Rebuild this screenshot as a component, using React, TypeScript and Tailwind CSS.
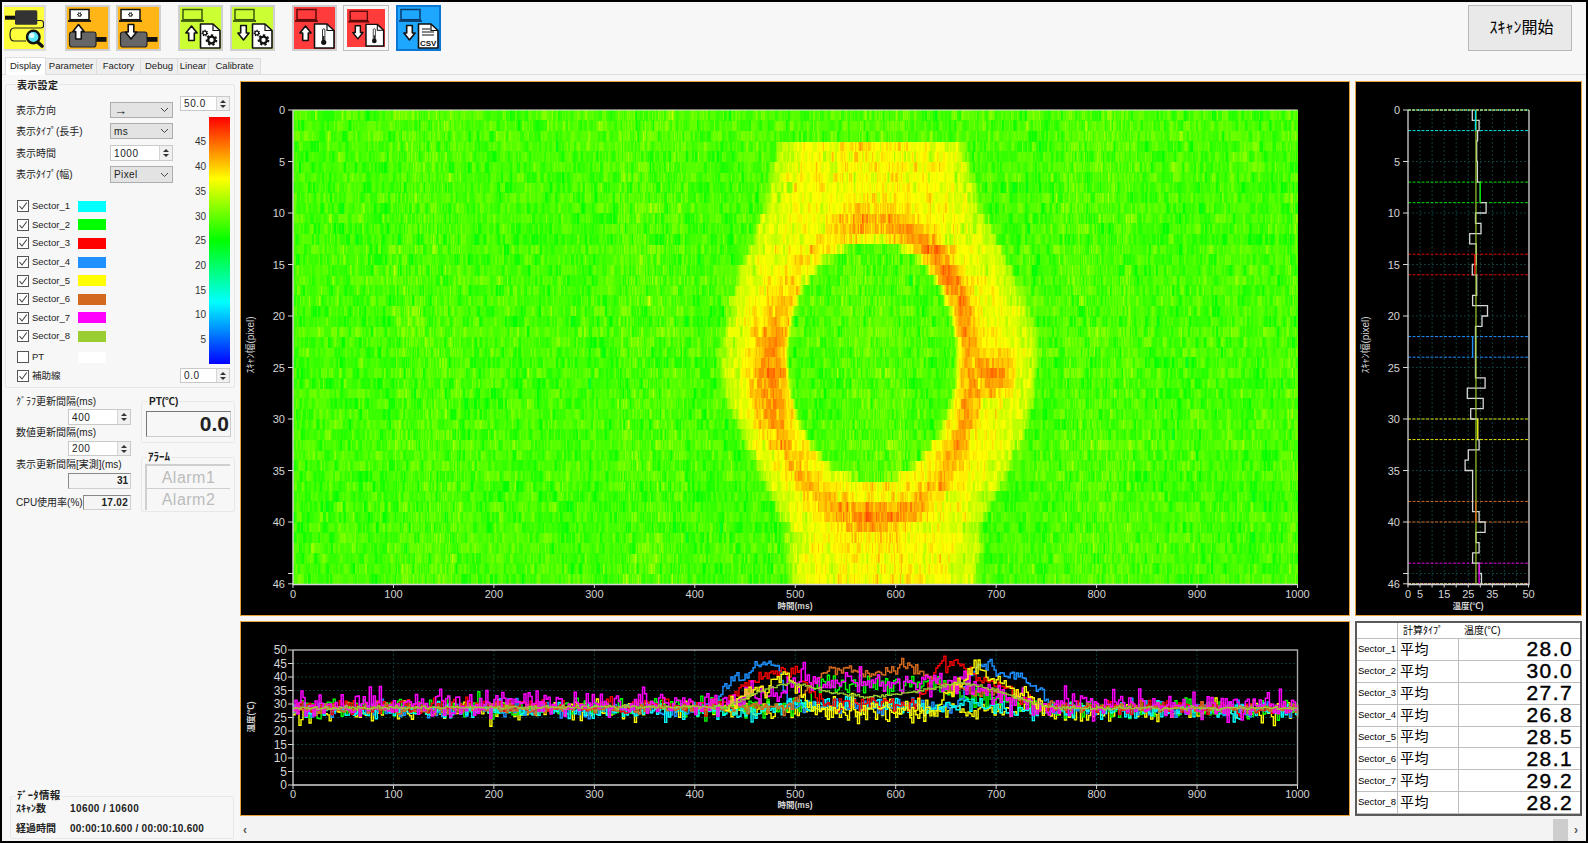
import React from "react";

function rng(seed: number) {
  let a = seed >>> 0;
  return () => {
    a = (a + 0x6d2b79f5) >>> 0;
    let t = a;
    t = Math.imul(t ^ (t >>> 15), t | 1);
    t ^= t + Math.imul(t ^ (t >>> 7), t | 61);
    return ((t ^ (t >>> 14)) >>> 0) / 4294967296;
  };
}
const gauss = (r: () => number) => Math.sqrt(-2 * Math.log(r() + 1e-9)) * Math.cos(6.2832 * r());
const clamp = (v: number, a = 0, b = 1) => Math.max(a, Math.min(b, v));
function interp(t: number[][], x: number) {
  if (x <= t[0][0]) return t[0][1];
  for (let i = 1; i < t.length; i++) {
    if (x <= t[i][0]) {
      const f = (x - t[i - 1][0]) / (t[i][0] - t[i - 1][0]);
      return t[i - 1][1] + f * (t[i][1] - t[i - 1][1]);
    }
  }
  return t[t.length - 1][1];
}

const LEFT = [[3.1, 485], [9, 469], [14, 450], [20, 430], [25, 424], [30, 438], [35, 464], [40, 489], [46, 495]];
const RIGHT = [[3.1, 667], [9, 682], [14, 707], [20, 734], [25, 742], [30, 732], [35, 712], [40, 686], [46, 680]];
const PEAK = [[-180, 41], [-135, 39], [-90, 42], [-60, 44], [-40, 45], [-20, 43.5], [0, 42.5], [30, 42.5], [60, 42], [90, 44], [120, 42], [150, 41], [180, 41]];

function field(ms: number, row: number) {
  const base = 29;
  if (row < 3.1) return base;
  const l = interp(LEFT, row);
  const r = interp(RIGHT, row);
  const e = Math.min(ms - l, r - ms);
  if (e < -4) return base;
  const s2 = clamp((e + 4) / 8);
  let v = 35 + 2.6 * clamp(e / 30);
  const dx = (ms - 576) / 84;
  const dy = (row - 24) / (row > 24 ? 12 : 11.3);
  const d = Math.sqrt(dx * dx + dy * dy);
  const th = (Math.atan2(dy, dx) * 180) / Math.PI;
  const dp = 1.16 + 0.14 * Math.max(0, Math.sin((th * Math.PI) / 180));
  const bump = Math.exp(-Math.pow((d - dp) / 0.13, 2));
  v = v + (interp(PEAK, th) - v) * bump;
  const sx = (ms - 474) / 19;
  const sy = (row - 25.5) / 5.5;
  const hot = Math.exp(-(sx * sx + sy * sy));
  v = v + (44 - v) * hot;
  const tx = (ms - 698) / 17;
  const ty = (row - 25.5) / 2.2;
  const tab = Math.exp(-(tx * tx * tx * tx + ty * ty * ty * ty));
  v = v + (43 - v) * tab;
  const inner = clamp((d - 0.97) / 0.06);
  const zone = base + s2 * (v - base);
  return base + 0.3 + inner * (zone - base - 0.3);
}

function buildHeat() {
  const r = rng(77);
  const buckets: Record<number, string[]> = {};
  const X0 = 293, Y0 = 110, RH = 10.3, CW = 1.0045;
  for (let row = 0; row < 46; row++) {
    let ar = 0;
    const y = Y0 + row * RH;
    let runStart = 0, runB = -1;
    const flush = (end: number) => {
      if (runB < 0) return;
      const w = ((end - runStart) * CW + 0.7).toFixed(1);
      (buckets[runB] = buckets[runB] || []).push(`M${(X0 + runStart * CW).toFixed(1)} ${y.toFixed(1)}h${w}v${RH + 0.7}h-${w}z`);
    };
    const off = gauss(r) * 0.25;
    for (let c = 0; c < 1000; c++) {
      ar = 0.45 * ar + 1.3 * gauss(r);
      const v = field(c + 0.5, row + 0.5) + ar + off;
      const h = clamp(240 - 4.8 * v, 0, 240);
      const b = Math.round(h / 4) * 4;
      if (b !== runB) {
        flush(c);
        runB = b;
        runStart = c;
      }
    }
    flush(1000);
  }
  return Object.keys(buckets).map((k) => ({ hue: Number(k), d: buckets[Number(k)].join("") }));
}
const HEAT = buildHeat();

const SERIES: { c: string; w: number; sd: number; t: number[][] }[] = [
  { c: "#ffff00", w: 1.4, sd: 1.8, t: [[0, 27.3], [425, 28], [1000, 27.3]] },
  { c: "#00ff00", w: 1.4, sd: 1.8, t: [[0, 28.5], [500, 29], [530, 37.5], [640, 38], [680, 32], [760, 28.5], [1000, 28.5]] },
  { c: "#1e90ff", w: 1.5, sd: 1.4, t: [[0, 28], [418, 28], [430, 38], [450, 40], [462, 44], [482, 44], [492, 30], [660, 29], [680, 44], [692, 45], [712, 40], [730, 38.5], [745, 34], [755, 28], [1000, 28]] },
  { c: "#00ffff", w: 1.4, sd: 1.4, t: [[0, 27.5], [470, 27.5], [500, 30], [640, 29], [680, 29.5], [720, 27.5], [1000, 27.5]] },
  { c: "#ff0000", w: 1.4, sd: 1.3, t: [[0, 28.5], [430, 30], [452, 38], [470, 41], [505, 41], [525, 30], [620, 30], [635, 40], [645, 45], [660, 45], [680, 40], [705, 36], [745, 29], [1000, 28.5]] },
  { c: "#d2691e", w: 1.5, sd: 1, t: [[0, 28], [490, 29], [510, 35], [535, 43], [552, 43.5], [578, 40], [600, 43.5], [615, 44], [632, 40], [650, 36], [700, 34], [745, 29], [1000, 28]] },
  { c: "#ff00ff", w: 1.5, sd: 2.4, t: [[0, 30], [420, 30], [450, 33], [485, 35], [500, 39], [520, 38], [645, 38], [675, 38], [695, 33], [745, 30], [1000, 30]] },
  { c: "#ffff01", w: 1.4, sd: 1.6, t: [[430, 28], [445, 34], [470, 36], [490, 42], [503, 36], [512, 28], [640, 28], [658, 37], [675, 43], [690, 42], [710, 37], [735, 32], [750, 28]] },
  { c: "#9acd32", w: 1.3, sd: 0.3, t: [[0, 28.5], [430, 29], [474, 36], [494, 38], [540, 34], [574, 32.5], [607, 34], [640, 36], [664, 38], [700, 35], [740, 30], [760, 28.5], [1000, 28.5]] },
];
const TY = (v: number) => 785 - 2.7 * v;
const LINES = SERIES.map((s, i) => {
  const r = rng(100 + i);
  let pts = "";
  const from = s.t[0][0];
  const to = s.t[s.t.length - 1][0];
  let prevY = "";
  for (let ms = from; ms <= to; ms += 2) {
    const v = interp(s.t, ms) + gauss(r) * s.sd;
    const x = (293 + ms * 1.0045).toFixed(1);
    const y = TY(v).toFixed(1);
    if (prevY) pts += `${x},${prevY} `;
    pts += `${x},${y} `;
    prevY = y;
  }
  return { c: s.c, w: s.w, pts };
});

const PROFILE: [number, number, number][] = [
  [0, 1, 26.7], [1, 2, 29.5], [2, 3, 28.9], [3, 5, 28.5], [5, 7, 28.8], [7, 9, 30], [9, 10, 32.4], [10, 11, 28], [11, 12, 30.3], [12, 13, 25.6], [13, 15, 28.3], [15, 16, 26.7], [16, 18, 28.5], [18, 19, 26.8], [19, 20, 33], [20, 21, 30.7], [21, 26, 28], [26, 27, 32], [27, 28, 24.6], [28, 29, 31.2], [29, 30, 26], [30, 32, 28.9], [32, 33, 29.5], [33, 34, 25], [34, 35, 23.7], [35, 39, 26.8], [39, 40, 29.5], [40, 41, 32], [41, 42, 28.2], [42, 43, 29.5], [43, 44, 26.8], [44, 45, 29.6], [45, 46, 30.5],
];
const PX = (t: number) => 1408 + t * 2.41;
const PY = (r: number) => 110 + r * 10.3;
const PROFILE_PTS = PROFILE.map(([a, b, t]) => `${PX(t).toFixed(1)},${PY(a).toFixed(1)} ${PX(t).toFixed(1)},${PY(b).toFixed(1)}`).join(" ");
const BANDS: [string, number, number, number][] = [
  ["#00e5e5", 0, 2, 28], ["#00e000", 7, 9, 30], ["#e00000", 14, 16, 27.7], ["#1e90ff", 22, 24, 26.8], ["#e8e800", 30, 32, 28.9], ["#d2691e", 38, 40, 28.1], ["#e000e0", 44, 46, 29.5],
];

const AXIS = "#d4d4d4";
const GRID = "#0c3b3b";

function Laptop({ c, fill = "none" }: { c: string; fill?: string }) {
  return (
    <g>
      <rect x="3" y="2.5" width="19" height="10.2" fill={fill} stroke={c} strokeWidth="1.5" />
      <path d="M1 14h23" stroke={c} strokeWidth="1.8" />
    </g>
  );
}
function Arrow({ x, y, down }: { x: number; y: number; down?: boolean }) {
  const d = down ? "M-2.8 -7.5 H2.8 V0 H5.6 L0 7 L-5.6 0 H-2.8 Z" : "M-2.8 7.5 H2.8 V0 H5.6 L0 -7 L-5.6 0 H-2.8 Z";
  return <path transform={`translate(${x} ${y})`} d={d} fill="#fff" stroke="#111" strokeWidth="1.6" strokeLinejoin="round" />;
}
function Doc() {
  return (
    <g>
      <path d="M20.5 17H33L40 23.5V41H20.5Z" fill="#fff" stroke="#111" strokeWidth="1.6" strokeLinejoin="round" />
      <path d="M33 17V23.5H40" fill="none" stroke="#111" strokeWidth="1.2" />
    </g>
  );
}
function Gear({ x, y, r }: { x: number; y: number; r: number }) {
  const c = 2 * Math.PI * r;
  return (
    <g>
      <circle cx={x} cy={y} r={r} fill="none" stroke="#111" strokeWidth={r * 0.55} strokeDasharray={`${c / 14} ${c / 14}`} />
      <circle cx={x} cy={y} r={r * 0.72} fill="none" stroke="#111" strokeWidth={r * 0.5} />
    </g>
  );
}
function Device() {
  return (
    <g>
      <rect x="29" y="30" width="10.5" height="4.8" fill="#111" />
      <rect x="2.5" y="25" width="26.5" height="15" rx="2.5" fill="#666" stroke="#222" strokeWidth="1.2" />
    </g>
  );
}
function Therm() {
  return (
    <g>
      <path d="M28.5 33V23a1.2 1.2 0 0 1 2.4 0V33" fill="#fff" stroke="#222" strokeWidth="0.9" />
      <circle cx="29.7" cy="35.3" r="2.6" fill="#111" />
      <path d="M29.7 29V34" stroke="#111" strokeWidth="1.2" />
    </g>
  );
}
function Tile({ bg, cls, children }: { bg: string; cls: string; children: React.ReactNode }) {
  return (
    <div className={cls}>
      <svg viewBox="0 0 41 42" className="w-full h-full block" style={{ background: bg }}>
        {children}
      </svg>
    </div>
  );
}
const T_STD = "w-[45px] h-[46px] border-2 border-[#cfcfcf] shrink-0";

function Toolbar() {
  return (
    <div className="h-[53px] flex items-start pt-[3px] bg-[#f7f7f7] shrink-0">
      <div className="w-[42px] h-[46px] ml-[2px] border-y-2 border-r-2 border-[#dcdcdc] shrink-0">
        <svg viewBox="0 0 40 42" className="w-full h-full block bg-[#ffff3c]">
          <path d="M33 13.5h4q2.5 0 2.5 2.5v3q0 2-2.5 2H10q-4 0-4 6.5t4 6.5h12" fill="none" stroke="#222" strokeWidth="1.2" />
          <rect x="1" y="8.7" width="10" height="4" fill="#111" />
          <rect x="11" y="3.3" width="22.3" height="14.4" rx="1.5" fill="#333" />
          <path d="M33 34.5L38 39" stroke="#111" strokeWidth="3.6" strokeLinecap="round" />
          <circle cx="29.3" cy="30" r="6.3" fill="#58e4f7" stroke="#111" strokeWidth="2.4" />
          <circle cx="27.8" cy="28.4" r="2.6" fill="#dffbff" />
        </svg>
      </div>
      <Tile bg="#ffb515" cls={`${T_STD} ml-[19px]`}>
        <Laptop c="#111" fill="#fff" />
        <Gear x={12.5} y={7.6} r={1.9} />
        <Device />
        <Arrow x={11.5} y={24.5} />
      </Tile>
      <Tile bg="#ffb515" cls={`${T_STD} ml-[6px]`}>
        <Laptop c="#111" fill="#fff" />
        <Gear x={12.5} y={7.6} r={1.9} />
        <Device />
        <Arrow x={13} y={25} down />
      </Tile>
      <Tile bg="#ccff33" cls={`${T_STD} ml-[17px]`}>
        <Laptop c="#3a5a10" />
        <Arrow x={11.5} y={26} />
        <Doc />
        <Gear x={24.8} y={26} r={2.6} />
        <Gear x={31.5} y={33} r={4.6} />
      </Tile>
      <Tile bg="#ccff33" cls={`${T_STD} ml-[7px]`}>
        <Laptop c="#3a5a10" />
        <Arrow x={11.5} y={26} down />
        <Doc />
        <Gear x={24.8} y={26} r={2.6} />
        <Gear x={31.5} y={33} r={4.6} />
      </Tile>
      <Tile bg="#ff3b3b" cls={`${T_STD} ml-[17px]`}>
        <Laptop c="#5c0a0a" />
        <Arrow x={11.5} y={26} />
        <Doc />
        <Therm />
      </Tile>
      <Tile bg="#ff3b3b" cls="w-[46px] h-[46px] border border-[#bdbdbd] p-[3px] bg-[#f7f7f7] ml-[6px] shrink-0">
        <Laptop c="#5c0a0a" />
        <Arrow x={11.5} y={26} down />
        <Doc />
        <Therm />
      </Tile>
      <Tile bg="#1ea7ff" cls="w-[45px] h-[46px] border-2 border-[#0b76d6] ml-[7px] shrink-0">
        <Laptop c="#0a3a6a" />
        <Arrow x={11.5} y={26} down />
        <Doc />
        <path d="M24 22h8M24 25h12M24 28h12" stroke="#111" strokeWidth="1.2" />
        <text x="30.2" y="38.5" textAnchor="middle" fontSize="8" fontWeight="700" fill="#111">CSV</text>
      </Tile>
      <div className="w-[104px] h-[46px] ml-auto mr-[14px] pl-[3px] bg-[#e9e9e9] border border-[#b8b8b8] flex items-center justify-center text-[16px] text-black shrink-0">
        ｽｷｬﾝ開始
      </div>
    </div>
  );
}

function Tabs() {
  const tabs: [string, string][] = [
    ["Parameter", "w-[51px]"], ["Factory", "w-[44px]"], ["Debug", "w-[37px]"], ["Linear", "w-[31px]"], ["Calibrate", "w-[52px]"],
  ];
  return (
    <div className="h-[20px] flex items-end pl-[3px] border-b border-[#dddddd] shrink-0">
      <div className="w-[41px] h-[18px] bg-white border-x border-t border-[#dddddd] flex items-center justify-center text-[9.5px] -mb-px pb-[1px]">Display</div>
      {tabs.map(([t, w]) => (
        <div key={t} className={`${w} h-[16px] bg-[#efefef] border-r border-t border-[#dddddd] flex items-center justify-center text-[9.5px]`}>{t}</div>
      ))}
    </div>
  );
}

function Chevron() {
  return (
    <svg width="9" height="6" viewBox="0 0 9 6" className="shrink-0">
      <path d="M1 1l3.5 3.5L8 1" fill="none" stroke="#444" strokeWidth="1" />
    </svg>
  );
}
function Select({ v, big }: { v: string; big?: boolean }) {
  return (
    <div className="w-[63px] h-full bg-[#e3e3e3] border border-[#adadad] flex items-center justify-between pl-[3px] pr-[3px] text-[10px] tracking-[0.4px]">
      <span className={big ? "text-[13px] leading-[13px]" : ""}>{v}</span>
      <Chevron />
    </div>
  );
}
function Spin({ v, w }: { v: string; w: string }) {
  return (
    <div className={`${w} h-full bg-white border border-[#c9c9c9] flex items-center text-[10px] tracking-[0.6px] shrink-0`}>
      <span className="flex-1 pl-[3px]">{v}</span>
      <span className="w-[13px] h-full flex flex-col items-center justify-center gap-[2px] bg-[#f0f0f0] border-l border-[#d5d5d5]">
        <span className="w-0 h-0 border-x-[3px] border-x-transparent border-b-[3px] border-b-[#333]" />
        <span className="w-0 h-0 border-x-[3px] border-x-transparent border-t-[3px] border-t-[#333]" />
      </span>
    </div>
  );
}
function Row({ label, children, cls }: { label: string; children: React.ReactNode; cls: string }) {
  return (
    <div className={`flex items-center ${cls}`}>
      <span className="w-[94px] text-[10px] whitespace-nowrap">{label}</span>
      {children}
    </div>
  );
}
function Check({ label, color, checked = true, cls }: { label: string; color?: string; checked?: boolean; cls?: string }) {
  return (
    <div className={`flex items-center h-[18.6px] pl-[1px] ${cls || ""}`}>
      <span className="w-[12px] h-[12px] border border-[#555] bg-white flex items-center justify-center shrink-0">
        {checked && (
          <svg width="10" height="10" viewBox="0 0 10 10">
            <path d="M1.5 5.2L4 8L8.8 1.5" fill="none" stroke="#444" strokeWidth="1.1" />
          </svg>
        )}
      </span>
      <span className="w-[46px] ml-[3px] text-[9.5px] whitespace-nowrap">{label}</span>
      {color && <span className="w-[28px] h-[11px]" style={{ background: color }} />}
    </div>
  );
}

const COLORS: [string, string][] = [
  ["Sector_1", "#00ffff"], ["Sector_2", "#00ff00"], ["Sector_3", "#ff0000"], ["Sector_4", "#1e90ff"],
  ["Sector_5", "#ffff00"], ["Sector_6", "#d2691e"], ["Sector_7", "#ff00ff"], ["Sector_8", "#9acd32"],
];

function Sidebar() {
  return (
    <div className="w-[238px] flex flex-col shrink-0">
      <div className="relative mt-[9px] ml-[3px] w-[230px] h-[304px] border border-[#e6e6e6] rounded-[2px] flex">
        <span className="absolute left-[10px] -top-[5px] px-[1px] bg-[#f7f7f7] text-[10px] font-bold tracking-[0.3px] leading-[11px]">表示設定</span>
        <div className="w-[174px] pl-[10px] pt-[17px] flex flex-col">
          <Row label="表示方向" cls="h-[16px]"><Select v="→" big /></Row>
          <Row label="表示ﾀｲﾌﾟ(長手)" cls="h-[16px] mt-[5px]"><Select v="ms" /></Row>
          <Row label="表示時間" cls="h-[16px] mt-[6px]"><Spin v="1000" w="w-[63px]" /></Row>
          <Row label="表示ﾀｲﾌﾟ(幅)" cls="h-[17px] mt-[5px]"><Select v="Pixel" /></Row>
          <div className="mt-[14px]">
            {COLORS.map(([n, c]) => (
              <Check key={n} label={n} color={c} />
            ))}
            <Check label="PT" color="#ffffff" checked={false} cls="mt-[2px]" />
            <Check label="補助線" />
          </div>
        </div>
        <div className="w-[50px] pt-[11px] flex flex-col">
          <div className="h-[15px]"><Spin v="50.0" w="w-[50px]" /></div>
          <div className="mt-[6px] h-[247px] flex justify-end">
            <div className="w-[26px] pr-[3px] pt-[12.6px] text-right text-[10px] text-[#333]">
              {["45", "40", "35", "30", "25", "20", "15", "10", "5"].map((t) => (
                <div key={t} className="h-[24.7px] flex items-center justify-end">{t}</div>
              ))}
            </div>
            <div className="w-[21px] h-full bg-[linear-gradient(to_bottom,#ff0000,#ffff00_25%,#00ff00_50%,#00ffff_75%,#0000ff)]" />
          </div>
          <div className="mt-[4px] h-[15px]"><Spin v="0.0" w="w-[50px]" /></div>
        </div>
      </div>

      <div className="flex">
        <div className="w-[129px] pl-[14px] pt-[8px] flex flex-col items-end">
          <div className="self-start h-[12px] text-[10px] leading-[12px] whitespace-nowrap">ｸﾞﾗﾌ更新間隔(ms)</div>
          <div className="h-[16px] mt-[1px]"><Spin v="400" w="w-[63px]" /></div>
          <div className="self-start h-[12px] mt-[2px] text-[10px] leading-[12px] whitespace-nowrap">数値更新間隔(ms)</div>
          <div className="h-[15px] mt-[2px]"><Spin v="200" w="w-[63px]" /></div>
          <div className="self-start h-[12px] mt-[3px] text-[10px] leading-[12px] whitespace-nowrap">表示更新間隔[実測](ms)</div>
          <div className="w-[63px] h-[16px] mt-[2px] bg-[#f5f5f5] border border-[#8a8a8a] border-r-[#cfcfcf] border-b-[#cfcfcf] text-[10px] font-bold text-right pr-[2px] leading-[14px]">31</div>
          <div className="self-stretch h-[15px] mt-[6px] flex items-center justify-between">
            <span className="text-[10px] whitespace-nowrap">CPU使用率(%)</span>
            <span className="w-[51px] h-full bg-[#f5f5f5] border border-[#8a8a8a] border-r-[#cfcfcf] border-b-[#cfcfcf] text-[10px] font-bold text-right pr-[2px] leading-[13px] tracking-[0.3px]">17.02</span>
          </div>
        </div>
        <div className="w-[94px] ml-[10px]">
          <div className="relative h-[42px] mt-[13px] border border-[#e8e8e8] rounded-[2px]">
            <span className="absolute left-[6px] -top-[6px] px-[1px] bg-[#f7f7f7] text-[10px] font-bold leading-[11px]">PT(℃)</span>
            <div className="w-[85px] h-[26px] ml-[4px] mt-[9px] bg-[#f7f7f7] border border-[#777] border-r-[#ccc] border-b-[#ccc] text-[21px] font-bold text-right pr-[1px] leading-[23px]">0.0</div>
          </div>
          <div className="relative h-[55px] mt-[14px] border border-[#e8e8e8] rounded-[2px]">
            <span className="absolute left-[5px] -top-[6px] px-[1px] bg-[#f7f7f7] text-[11px] font-bold leading-[11px]">ｱﾗｰﾑ</span>
            <div className="w-[85px] h-[24px] ml-[3px] mt-[6px] border-t-2 border-l-2 border-[#cfcfcf] text-[16px] text-[#bcbcbc] text-center tracking-[0.5px] leading-[23px]">Alarm1</div>
            <div className="w-[85px] h-[22px] ml-[3px] border-t border-l-2 border-[#cfcfcf] text-[16px] text-[#bcbcbc] text-center tracking-[0.5px] leading-[22px]">Alarm2</div>
          </div>
        </div>
      </div>

      <div className="relative mt-auto mb-[2px] ml-[8px] w-[224px] h-[43px] border border-[#e8e8e8] rounded-[2px] text-[10px] font-bold flex flex-col pl-[5px]">
        <span className="absolute left-[5px] -top-[7px] px-[1px] bg-[#f7f7f7] text-[10.5px] leading-[11px] tracking-[0.3px]">ﾃﾞｰﾀ情報</span>
        <div className="flex items-center h-[12px] mt-[5px]">
          <span className="w-[54px]">ｽｷｬﾝ数</span>
          <span className="tracking-[0.4px]">10600 / 10600</span>
        </div>
        <div className="flex items-center h-[12px] mt-[8px]">
          <span className="w-[54px]">経過時間</span>
          <span className="tracking-[0.25px]">00:00:10.600 / 00:00:10.600</span>
        </div>
      </div>
    </div>
  );
}

function HeatPanel() {
  const ticks = [0, 100, 200, 300, 400, 500, 600, 700, 800, 900, 1000];
  const rows = [0, 5, 10, 15, 20, 25, 30, 35, 40, 46];
  return (
    <div className="bg-black border border-[#e8a33d]">
      <svg viewBox="241 82 1108 533" className="w-full h-full block">
        <rect x="293" y="110" width="1004.5" height="474" fill="hsl(100 100% 50%)" />
        <g shapeRendering="crispEdges">
          {HEAT.map((b) => (
            <path key={b.hue} d={b.d} fill={`hsl(${b.hue} 100% 50%)`} />
          ))}
        </g>
        <path d="M293 110H1297.5" stroke="#eaeaea" strokeWidth="1" />
        <path d="M293 110V584.5H1297.5" fill="none" stroke={AXIS} strokeWidth="1.4" />
        {ticks.map((t) => {
          const x = 293 + t * 1.0045;
          return (
            <g key={t}>
              <path d={`M${x} 584v4`} stroke={AXIS} />
              <text x={x} y="598" textAnchor="middle" fontSize="11" fill={AXIS}>{t}</text>
            </g>
          );
        })}
        {rows.map((t) => {
          const y = 110 + t * 10.3;
          return (
            <g key={t}>
              <path d={`M288 ${y}h5`} stroke={AXIS} />
              <text x="285" y={y + 4} textAnchor="end" fontSize="11" fill={AXIS}>{t}</text>
            </g>
          );
        })}
        <path d="M288 573.5h5" stroke={AXIS} />
        <text x="795" y="609" textAnchor="middle" fontSize="8.5" fontWeight="700" fill={AXIS}>時間(ms)</text>
        <text transform="translate(254 345) rotate(-90)" textAnchor="middle" fontSize="10" fill={AXIS}>ｽｷｬﾝ幅(pixel)</text>
      </svg>
    </div>
  );
}

function ProfilePanel() {
  const rows = [0, 5, 10, 15, 20, 25, 30, 35, 40, 46];
  const xs = [0, 5, 15, 25, 35, 50];
  const grid = Array.from({ length: 9 }, (_, i) => (i + 1) * 5);
  return (
    <div className="bg-black border border-[#e8a33d]">
      <svg viewBox="1356 82 225 533" className="w-full h-full block">
        {grid.map((g) => (
          <path key={g} d={`M${PX(g)} 110V584`} stroke={GRID} strokeDasharray="2 2" />
        ))}
        {[5, 10, 15, 20, 25, 30, 35, 40, 45].map((r) => (
          <path key={r} d={`M1408 ${PY(r)}H1529`} stroke={GRID} strokeDasharray="2 2" />
        ))}
        {BANDS.map(([c, a, b]) => (
          <g key={a}>
            <path d={`M1408 ${PY(a)}H1529`} stroke={c} strokeDasharray="3 1.5" strokeWidth="1" />
            <path d={`M1408 ${PY(b)}H1529`} stroke={c} strokeDasharray="3 1.5" strokeWidth="1" />
          </g>
        ))}
        <path d={`M1408 ${PY(0)}H1529`} stroke="#ffff66" strokeDasharray="3 1" strokeWidth="1.2" />
        <path d={`M1408 ${PY(46)}H1529`} stroke="#c8e050" strokeDasharray="3 1" strokeWidth="1.2" />
        <polyline points={PROFILE_PTS} fill="none" stroke="#d6d6d6" strokeWidth="1.3" />
        <path d={`M${PX(28.2)} 110V584`} stroke="#9acd32" strokeWidth="1.2" />
        {BANDS.map(([c, a, b, t]) => (
          <path key={c} d={`M${PX(t)} ${PY(a)}V${PY(b)}`} stroke={c} strokeWidth="1.4" />
        ))}
        <path d="M1408 110V584.5H1529V110" fill="none" stroke={AXIS} strokeWidth="1.3" />
        {rows.map((t) => (
          <g key={t}>
            <path d={`M1403 ${PY(t)}h5`} stroke={AXIS} />
            <text x="1400" y={PY(t) + 4} textAnchor="end" fontSize="11" fill={AXIS}>{t}</text>
          </g>
        ))}
        <path d={`M1403 ${PY(45)}h5`} stroke={AXIS} />
        {grid.concat([0, 50]).map((g) => (
          <path key={g} d={`M${PX(g)} 584.5v3`} stroke={AXIS} />
        ))}
        {xs.map((t) => (
          <text key={t} x={PX(t)} y="598" textAnchor="middle" fontSize="11" fill={AXIS}>{t}</text>
        ))}
        <text x="1468" y="609" textAnchor="middle" fontSize="8.5" fontWeight="700" fill={AXIS}>温度(℃)</text>
        <text transform="translate(1369 345) rotate(-90)" textAnchor="middle" fontSize="10" fill={AXIS}>ｽｷｬﾝ幅(pixel)</text>
      </svg>
    </div>
  );
}

function TrendPanel() {
  const ticks = [0, 100, 200, 300, 400, 500, 600, 700, 800, 900, 1000];
  const ys = [0, 5, 10, 15, 20, 25, 30, 35, 40, 45, 50];
  return (
    <div className="bg-black border border-[#e8a33d]">
      <svg viewBox="241 622 1108 193" className="w-full h-full block">
        {ticks.slice(1, -1).map((t) => (
          <path key={t} d={`M${293 + t * 1.0045} 650V785`} stroke={GRID} strokeDasharray="2 2" />
        ))}
        {ys.slice(1, -1).map((t) => (
          <path key={t} d={`M293 ${TY(t)}H1297.5`} stroke={GRID} strokeDasharray="2 2" />
        ))}
        <g>
          {LINES.map((l) => (
            <polyline key={l.c} points={l.pts} fill="none" stroke={l.c} strokeWidth={l.w} strokeLinejoin="miter" />
          ))}
        </g>
        <path d="M293 650H1297.5V785" fill="none" stroke="#a8a8a8" strokeWidth="1.4" />
        <path d="M293 650V785H1297.5" fill="none" stroke={AXIS} strokeWidth="1.3" />
        {ys.map((t) => (
          <g key={t}>
            <path d={`M288 ${TY(t)}h5`} stroke={AXIS} />
            <text x="287" y={TY(t) + 4} textAnchor="end" fontSize="12" fill={AXIS}>{t}</text>
          </g>
        ))}
        {ticks.map((t) => {
          const x = 293 + t * 1.0045;
          return (
            <g key={t}>
              <path d={`M${x} 785v4`} stroke={AXIS} />
              <text x={x} y="798" textAnchor="middle" fontSize="11" fill={AXIS}>{t}</text>
            </g>
          );
        })}
        <text x="795" y="808" textAnchor="middle" fontSize="8.5" fontWeight="700" fill={AXIS}>時間(ms)</text>
        <text transform="translate(254 717) rotate(-90)" textAnchor="middle" fontSize="8.5" fontWeight="700" fill={AXIS}>温度(℃)</text>
      </svg>
    </div>
  );
}

function SectorTable() {
  const vals = ["28.0", "30.0", "27.7", "26.8", "28.5", "28.1", "29.2", "28.2"];
  return (
    <div className="bg-white border-2 border-[#5a5a5a] grid grid-cols-[41px_61px_1fr] grid-rows-[16px_repeat(8,minmax(0,1fr))] text-black">
      <div className="border-r border-b border-[#bdbdbd]" />
      <div className="border-b border-[#bdbdbd] text-[10px] pl-[5px] leading-[15px]">計算ﾀｲﾌﾟ</div>
      <div className="border-b border-[#bdbdbd] text-[10px] pl-[5px] leading-[15px]">温度(℃)</div>
      {vals.map((v, i) => (
        <React.Fragment key={i}>
          <div className="border-r border-b border-[#bdbdbd] text-[9.5px] flex items-center pl-[1px] whitespace-nowrap">{`Sector_${i + 1}`}</div>
          <div className="border-r border-b border-[#bdbdbd] text-[14px] flex items-center pl-[2px] tracking-[0.5px]">平均</div>
          <div className="border-b border-[#bdbdbd] flex items-center justify-end pr-[7px]">
            <span className="block text-[21px] tracking-[1.4px] leading-[20px] h-[20px] [-webkit-text-stroke:0.4px_black]">{v}</span>
          </div>
        </React.Fragment>
      ))}
    </div>
  );
}

export default function App() {
  return (
    <div className="w-[1588px] h-[843px] flex flex-col overflow-hidden bg-[#f7f7f7] text-[#222] border-y-2 border-r-2 border-l-2 border-black border-l-dotted font-['Liberation_Sans','Noto_Sans_CJK_JP',sans-serif]">
      <Toolbar />
      <Tabs />
      <div className="flex-1 flex min-h-0">
        <Sidebar />
        <div className="flex-1 flex flex-col pt-[6px] min-w-0">
          <div className="grid grid-cols-[1110px_227px] grid-rows-[535px_195px] gap-[5px]">
            <HeatPanel />
            <ProfilePanel />
            <TrendPanel />
            <SectorTable />
          </div>
          <div className="flex-1 flex items-stretch justify-between text-[#555] text-[12px] font-bold bg-[#f3f3f3] pr-[2px] pt-[3px]">
            <span className="pl-[3px] self-center">‹</span>
            <div className="flex items-stretch">
              <span className="w-[15px] bg-[#cdcdcd]" />
              <span className="w-[16px] flex items-center justify-center">›</span>
            </div>
          </div>
        </div>
      </div>
    </div>
  );
}
